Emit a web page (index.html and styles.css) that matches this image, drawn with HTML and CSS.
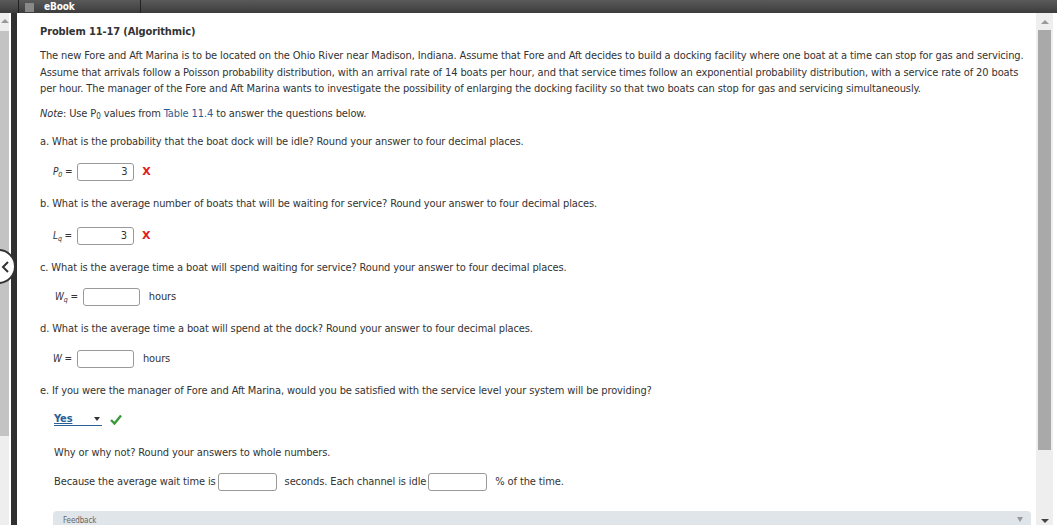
FILE: index.html
```html
<!DOCTYPE html>
<html>
<head>
<meta charset="utf-8">
<link rel="stylesheet" href="styles.css">
</head>
<body>
<div class="topbar">
  <div class="tab"><span class="tab-icon"></span><span class="tab-label">eBook</span></div>
</div>
<div class="main">
  <div class="leftrail">
    <div class="lscroll"><span class="arrow-up"></span><div class="lthumb"></div></div>
    <div class="darkbar"></div>
  </div>
  <div class="content">
    <h1 class="title">Problem 11-17 (Algorithmic)</h1>
    <p class="para">The new Fore and Aft Marina is to be located on the Ohio River near Madison, Indiana. Assume that Fore and Aft decides to build a docking facility where one boat at a time can stop for gas and servicing. Assume that arrivals follow a Poisson probability distribution, with an arrival rate of 14 boats per hour, and that service times follow an exponential probability distribution, with a service rate of 20 boats per hour. The manager of the Fore and Aft Marina wants to investigate the possibility of enlarging the docking facility so that two boats can stop for gas and servicing simultaneously.</p>
    <p class="note"><i>Note</i>: Use P<sub>0</sub> values from <span class="link">Table 11.4</span> to answer the questions below.</p>

    <p class="q q-a">a. What is the probability that the boat dock will be idle? Round your answer to four decimal places.</p>
    <div class="ans ans-a"><span class="lbl"><i>P<sub>0</sub></i> =</span><span class="box">3</span><span class="wrong">X</span></div>

    <p class="q">b. What is the average number of boats that will be waiting for service? Round your answer to four decimal places.</p>
    <div class="ans ans-b"><span class="lbl"><i>L<sub>q</sub></i> =</span><span class="box">3</span><span class="wrong">X</span></div>

    <p class="q">c. What is the average time a boat will spend waiting for service? Round your answer to four decimal places.</p>
    <div class="ans ans-c"><span class="lbl"><i>W<sub>q</sub></i> =</span><span class="box"></span><span class="unit">hours</span></div>

    <p class="q">d. What is the average time a boat will spend at the dock? Round your answer to four decimal places.</p>
    <div class="ans ans-d"><span class="lbl"><i>W</i> =</span><span class="box"></span><span class="unit">hours</span></div>

    <p class="q">e. If you were the manager of Fore and Aft Marina, would you be satisfied with the service level your system will be providing?</p>
    <div class="ans ans-e">
      <span class="select">Yes<span class="caret"></span></span>
      <svg class="check" width="12" height="11" viewBox="0 0 12 11"><path d="M1 6 L4.5 9.5 L11 1.5" fill="none" stroke="#3a9a3a" stroke-width="2.4"/></svg>
    </div>
    <p class="sub">Why or why not? Round your answers to whole numbers.</p>
    <div class="ans ans-f">Because the average wait time is <span class="box wide"></span><span class="unit">seconds. Each channel is idle</span><span class="box wide"></span><span class="unit">% of the time.</span></div>

    <div class="feedback"><span>Feedback</span><span class="fb-caret"></span></div>
  </div>
  <div class="rscroll"><span class="arrow-up r"></span><div class="rthumb"></div><span class="arrow-down"></span></div>
</div>
<div class="navcircle"><svg width="10" height="12" viewBox="0 0 10 12"><path d="M7 1 L2 6 L7 11" fill="none" stroke="#333" stroke-width="2"/></svg></div>
</body>
</html>
```

FILE: styles.css
```css
html, body {
  margin: 0;
  padding: 0;
}
body {
  width: 1057px;
  height: 525px;
  overflow: hidden;
  position: relative;
  background: #fff;
  font-family: "DejaVu Sans Condensed", "DejaVu Sans", sans-serif;
  font-size: 11px;
  letter-spacing: -0.12px;
  color: #333;
}
.topbar {
  height: 13px;
  background: linear-gradient(#5a5a5a, #3c3c3c);
  display: flex;
  overflow: hidden;
}
.tab {
  margin-left: 18px;
  width: 115px;
  border-left: 1px solid #222;
  border-right: 1px solid #222;
  display: flex;
  align-items: flex-end;
  gap: 10px;
  padding-left: 6px;
}
.tab-icon {
  width: 9px;
  height: 9px;
  background: #888;
  margin-bottom: 1px;
}
.tab-label {
  color: #fff;
  font-weight: bold;
  font-size: 10px;
  line-height: 10px;
  margin-bottom: 1px;
}
.main {
  display: flex;
  height: 512px;
}
.leftrail {
  width: 17px;
  display: flex;
  flex: none;
}
.lscroll {
  width: 9px;
  background: #eee;
  display: flex;
  flex-direction: column;
  align-items: center;
  padding-top: 6px;
}
.lthumb {
  width: 9px;
  height: 405px;
  margin-top: 8px;
  background: #c3c3c3;
}
.arrow-up {
  width: 0;
  height: 0;
  border-left: 4px solid transparent;
  border-right: 4px solid transparent;
  border-bottom: 4px solid #999;
}
.darkbar {
  margin-left: 2px;
  width: 6px;
  background: #303030;
}
.content {
  flex: 1;
  padding: 12px 0 0 23px;
  position: relative;
}
.title {
  margin: 0 0 10px;
  font-size: 11px;
  font-weight: bold;
  line-height: 13px;
  color: #333;
}
.para {
  margin: 0 8px 0 0;
  line-height: 16.5px;
}
.note {
  margin: 8px 0 0;
  line-height: 16px;
}
sub {
  font-size: 8px;
  vertical-align: -2px;
  line-height: 0;
}
.link {
  color: #2a5f94;
}
.q {
  margin: 15px 0 0;
  line-height: 16px;
}
.q.q-a {
  margin-top: 12px;
}
.ans {
  display: flex;
  align-items: center;
  height: 18px;
  margin-top: 13px;
  padding-left: 13px;
}
.lbl {
  font-size: 10px;
  margin-right: 5px;
}
.lbl sub {
  font-size: 7px;
}
.box {
  box-sizing: border-box;
  width: 57px;
  height: 18px;
  border: 1px solid #999;
  border-radius: 3px;
  text-align: right;
  padding-right: 6px;
  line-height: 16px;
  font-size: 11px;
}
.box.wide {
  width: 59px;
  margin-left: 2px;
}
.wrong {
  color: #e02020;
  font-weight: bold;
  font-size: 11px;
  margin-left: 8px;
  font-family: "DejaVu Sans", sans-serif;
}
.unit {
  margin-left: 9px;
}
.ans-b {
  margin-top: 15px;
}
.ans-c {
  padding-left: 15px;
  margin-top: 12px;
}
.ans-e {
  padding-left: 14px;
  margin-top: 12px;
}
.select {
  width: 48px;
  box-sizing: border-box;
  font-weight: bold;
  color: #2a5f94;
  text-decoration: underline;
  border-bottom: 1px solid #2a5f94;
  display: flex;
  align-items: center;
  justify-content: space-between;
  height: 13px;
  line-height: 12px;
}
.caret {
  width: 0;
  height: 0;
  border-left: 3px solid transparent;
  border-right: 3px solid transparent;
  border-top: 4px solid #333;
  margin-right: 2px;
}
.check {
  margin-left: 8px;
}
.sub {
  margin: 16px 0 0 14px;
  line-height: 16px;
}
.ans-f {
  padding-left: 14px;
  margin-top: 12px;
}
.ans-f .unit {
  margin-left: 8px;
}
.feedback {
  position: absolute;
  left: 36px;
  right: 5px;
  top: 498px;
  height: 30px;
  background: #dfe5e8;
  border-radius: 4px;
  font-size: 8px;
  color: #666;
  padding: 5px 10px;
  box-sizing: border-box;
}
.fb-caret {
  position: absolute;
  right: 8px;
  top: 6px;
  border-left: 3px solid transparent;
  border-right: 3px solid transparent;
  border-top: 5px solid #999;
}
.rscroll {
  width: 17px;
  flex: none;
  margin-right: 4px;
  background: #eee;
  display: flex;
  flex-direction: column;
  align-items: center;
  padding-top: 7px;
  position: relative;
}
.rthumb {
  width: 13px;
  height: 420px;
  margin-top: 6px;
  background: #a9a9a9;
}
.arrow-down {
  position: absolute;
  bottom: 2px;
  border-left: 4px solid transparent;
  border-right: 4px solid transparent;
  border-top: 4px solid #444;
}
.navcircle {
  position: absolute;
  left: -19px;
  top: 249px;
  width: 35px;
  height: 35px;
  border: 2px solid #333;
  border-radius: 50%;
  background: #fff;
  display: flex;
  align-items: center;
  justify-content: flex-end;
  padding-right: 3px;
  box-sizing: border-box;
}
```
